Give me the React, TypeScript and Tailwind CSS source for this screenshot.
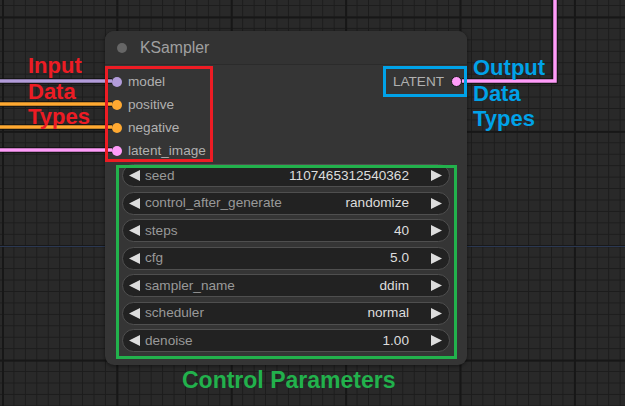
import React from "react";

const inputs = [
  { name: "model", color: "#b39ddb" },
  { name: "positive", color: "#ffa931" },
  { name: "negative", color: "#ffa931" },
  { name: "latent_image", color: "#ff9cf9" },
];

const widgets = [
  { label: "seed", value: "1107465312540362" },
  { label: "control_after_generate", value: "randomize" },
  { label: "steps", value: "40" },
  { label: "cfg", value: "5.0" },
  { label: "sampler_name", value: "ddim" },
  { label: "scheduler", value: "normal" },
  { label: "denoise", value: "1.00" },
];

function LeftArrow() {
  return (
    <svg width="12" height="11" viewBox="0 0 12 11" className="shrink-0">
      <polygon points="11,0 11,11 0,5.5" fill="#dddddd" />
    </svg>
  );
}

function RightArrow() {
  return (
    <svg width="12" height="11" viewBox="0 0 12 11" className="shrink-0">
      <polygon points="1,0 1,11 12,5.5" fill="#dddddd" />
    </svg>
  );
}

export default function App() {
  return (
    <div
      className="relative w-[625px] h-[406px] overflow-hidden bg-[#292929] bg-[linear-gradient(to_right,#171717_2px,transparent_2px),linear-gradient(to_bottom,#171717_2px,transparent_2px),linear-gradient(to_right,#1c1c1c_1px,transparent_1px),linear-gradient(to_bottom,#1c1c1c_1px,transparent_1px)] [background-size:114.4px_114.4px,114.4px_114.4px,11.44px_11.44px,11.44px_11.44px] [background-position:2px_16.5px] font-['Liberation_Sans',Arial,sans-serif]"
    >
      {/* blue guide line */}
      <div className="absolute left-0 right-0 top-[245.5px] h-[1.5px] bg-[#2b3852]" />

      {/* Node */}
      <div className="absolute left-[105px] top-[31px] w-[362px] h-[334px] rounded-[9px] bg-[#353535] shadow-[0_1px_4px_rgba(0,0,0,0.5)] flex flex-col">
        <div className="h-[34px] shrink-0 flex items-center rounded-t-[9px] bg-[#333333] border-b border-[#2b2b2b]">
          <div className="ml-[12px] w-[10px] h-[10px] rounded-full bg-[#666666]" />
          <span className="ml-[13px] text-[15.8px] text-[#a0a0a0] leading-none">KSampler</span>
        </div>
        <div className="flex justify-between pt-[5px]">
          <div className="flex flex-col">
            {inputs.map((inp) => (
              <div key={inp.name} className="h-[23px] flex items-center">
                <div
                  className="ml-[7px] w-[10px] h-[10px] rounded-full"
                  style={{ backgroundColor: inp.color }}
                />
                <span className="ml-[6px] text-[13.6px] text-[#b0b0b0] leading-none">{inp.name}</span>
              </div>
            ))}
          </div>
          <div className="flex flex-col">
            <div className="h-[23px] flex items-center">
              <span className="text-[13.6px] text-[#b0b0b0] leading-none">LATENT</span>
              <div className="ml-[7px] mr-[5px] w-[11px] h-[11px] rounded-full bg-[#ff9cf9] border border-[#1a1a1a]" />
            </div>
          </div>
        </div>
        <div className="mt-[2px] px-[17px] flex flex-col gap-[4.5px]">
          {widgets.map((w) => (
            <div
              key={w.label}
              className="h-[23px] rounded-full bg-[#222222] border border-[#4f4f4f] flex items-center pl-[6px] pr-[7px]"
            >
              <LeftArrow />
              <span className="ml-[4px] text-[13.6px] text-[#999999] leading-none">{w.label}</span>
              <span className="ml-auto mr-[21px] text-[13.6px] text-[#dddddd] leading-none">{w.value}</span>
              <RightArrow />
            </div>
          ))}
        </div>
      </div>

      {/* Wires */}
      <svg className="absolute left-0 top-0 pointer-events-none" width="625" height="406" viewBox="0 0 625 406">
        <g fill="none" strokeLinejoin="miter">
          <path d="M -5 81 H 112" stroke="#111" strokeWidth="5.5" />
          <path d="M -5 81 H 112" stroke="#b39ddb" strokeWidth="3.5" />
          <path d="M -5 104 H 112" stroke="#111" strokeWidth="5.5" />
          <path d="M -5 104 H 112" stroke="#ffa931" strokeWidth="3.5" />
          <path d="M -5 127 H 112" stroke="#111" strokeWidth="5.5" />
          <path d="M -5 127 H 112" stroke="#ffa931" strokeWidth="3.5" />
          <path d="M -5 150 H 112" stroke="#111" strokeWidth="5.5" />
          <path d="M -5 150 H 112" stroke="#ff9cf9" strokeWidth="3.5" />
          <path d="M 462 81 H 555 V -5" stroke="#111" strokeWidth="5.5" />
          <path d="M 462 81 H 555 V -5" stroke="#ff9cf9" strokeWidth="3.5" />
        </g>
      </svg>

      {/* Annotation boxes */}
      <div className="absolute left-[105px] top-[66px] w-[108px] h-[96px] border-[3px] border-[#ed1c24]" />
      <div className="absolute left-[383px] top-[66px] w-[84px] h-[31px] border-[3px] border-[#00a2e8]" />
      <div className="absolute left-[116px] top-[165px] w-[341px] h-[194px] border-[3px] border-[#22b14c]" />

      {/* Annotation labels */}
      <div className="absolute left-[28px] top-[53px] text-[22px] leading-[25.5px] font-bold text-[#ed1c24]">
        <div>Input</div>
        <div>Data</div>
        <div>Types</div>
      </div>
      <div className="absolute left-[473px] top-[55px] text-[22px] leading-[25.5px] font-bold text-[#00a2e8]">
        <div>Output</div>
        <div>Data</div>
        <div>Types</div>
      </div>
      <div className="absolute left-[182px] top-[368px] text-[23px] leading-[25.5px] font-bold text-[#22b14c]">
        Control Parameters
      </div>
    </div>
  );
}
